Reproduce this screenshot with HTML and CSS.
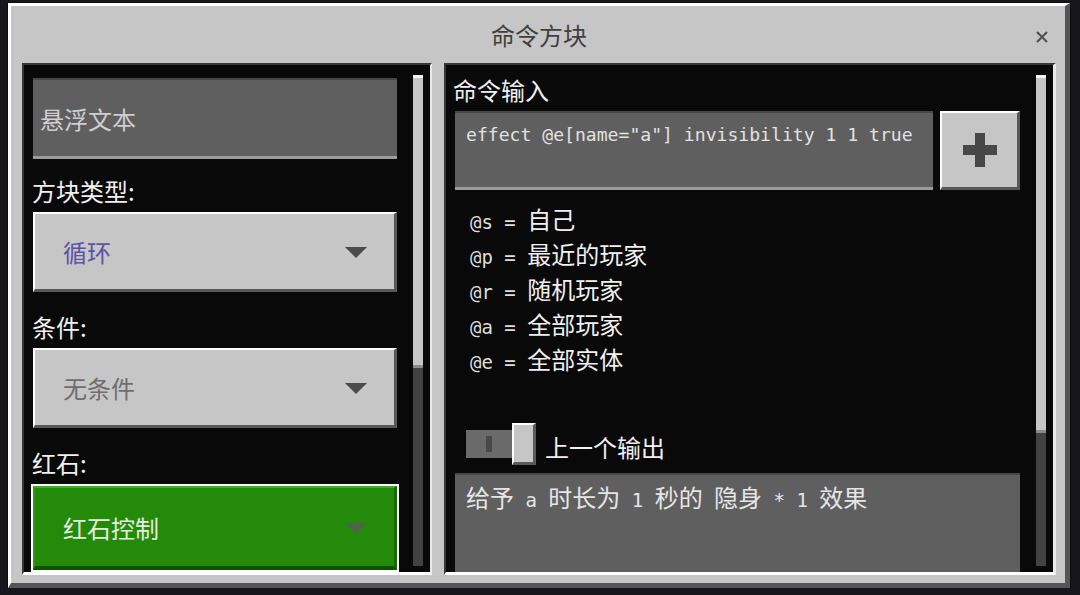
FILE: index.html
```html
<!DOCTYPE html>
<html lang="zh-CN">
<head>
  <meta charset="UTF-8">
  <meta name="viewport" content="width=device-width, initial-scale=1.0">
  <title>命令方块</title>
  <link rel="stylesheet" href="styles.css">
</head>
<body>
  <div class="dialog">
    <!-- Title bar -->
    <header class="titlebar">
      <span></span>
      <h1 class="title">命令方块</h1>
      <button class="close" aria-label="close">
        <svg width="14" height="14" viewBox="0 0 14 14">
          <path d="M2 2 L12 12 M12 2 L2 12" stroke="#4e4e4e" stroke-width="2" fill="none"/>
        </svg>
      </button>
    </header>

    <div class="panels">
      <!-- Left: block settings -->
      <section class="panel panel-left">
        <div class="panel-content">
          <div class="field field-name">悬浮文本</div>

          <div class="label label-first">方块类型:</div>
          <div class="dropdown">
            <span class="value value-blue">循环</span>
            <span class="arrow"></span>
          </div>

          <div class="label">条件:</div>
          <div class="dropdown">
            <span class="value value-gray">无条件</span>
            <span class="arrow"></span>
          </div>

          <div class="label">红石:</div>
          <div class="dropdown dropdown-green">
            <span class="value value-light">红石控制</span>
            <span class="arrow arrow-dim"></span>
          </div>
        </div>
        <div class="scrollbar"><div class="thumb thumb-left"></div></div>
      </section>

      <!-- Right: command input -->
      <section class="panel panel-right">
        <div class="panel-content">
          <div class="label label-top">命令输入</div>
          <div class="command-row">
            <div class="field field-command">effect @e[name="a"] invisibility 1 1 true</div>
            <button class="plus" aria-label="add">
              <svg width="36" height="36" viewBox="0 0 36 36">
                <rect x="13" y="1" width="10" height="34" fill="#474747"/>
                <rect x="1" y="13" width="34" height="10" fill="#474747"/>
              </svg>
            </button>
          </div>

          <ul class="selectors">
            <li><span class="mono">@s = </span>自己</li>
            <li><span class="mono">@p = </span>最近的玩家</li>
            <li><span class="mono">@r = </span>随机玩家</li>
            <li><span class="mono">@a = </span>全部玩家</li>
            <li><span class="mono">@e = </span>全部实体</li>
          </ul>

          <div class="toggle-row">
            <div class="toggle">
              <div class="toggle-track"><span class="toggle-mark"></span></div>
              <div class="toggle-knob"></div>
            </div>
            <span class="toggle-label">上一个输出</span>
          </div>

          <div class="field field-output">给予<span class="mono"> a </span>时长为<span class="mono"> 1 </span>秒的<span class="mono"> </span>隐身<span class="mono"> * 1 </span>效果</div>
        </div>
        <div class="scrollbar"><div class="thumb thumb-right"></div></div>
      </section>
    </div>
  </div>
</body>
</html>
```

FILE: styles.css
```css
* {
  box-sizing: border-box;
}

body {
  margin: 0;
  background-color: #16161c;
  font-family: "Noto Sans CJK SC", sans-serif;
  font-size: 24px;
  color: #ececec;
}

.mono {
  font-family: "DejaVu Sans Mono", monospace;
  font-size: 19px;
}

/* Dialog frame */
.dialog {
  margin: 3px 0 0 8px;
  width: 1062px;
  height: 585px;
  background-color: #c6c6c6;
  border-top: 3px solid #fff;
  border-left: 3px solid #fff;
  border-bottom: 5px solid #555;
  border-right: 5px solid #555;
  outline: 1px solid #0c0c0c;
  display: flex;
  flex-direction: column;
  padding: 0 9px 8px 11px;
}

.titlebar {
  height: 57px;
  flex-shrink: 0;
  display: grid;
  grid-template-columns: 1fr auto 1fr;
  align-items: start;
  padding-top: 17px;
}

.title {
  margin: 0;
  font-size: 24px;
  font-weight: normal;
  line-height: 24px;
  color: #3f3f3f;
}

.close {
  justify-self: end;
  margin-right: 7px;
  margin-top: 7px;
  padding: 0;
  border: none;
  background: none;
  width: 14px;
  height: 14px;
  line-height: 0;
}

/* Panels */
.panels {
  flex: 1;
  display: flex;
  gap: 12px;
  min-height: 0;
}

.panel {
  background-color: #090909;
  border-top: 2px solid #363636;
  border-left: 2px solid #363636;
  border-bottom: 3px solid #fff;
  border-right: 2px solid #e8e8e8;
  display: flex;
  overflow: hidden;
}

.panel-left {
  width: 410px;
}

.panel-right {
  flex: 1;
  border-right-width: 3px;
}

.panel-content {
  flex: 1;
  min-width: 0;
  display: flex;
  flex-direction: column;
  padding: 13px 16px 0 9px;
}

.panel-right .panel-content {
  padding-top: 10px;
}

.scrollbar {
  width: 10px;
  margin: 10px 7px 6px 0;
  background-color: #424242;
  display: flex;
  flex-direction: column;
}

.thumb {
  background-color: #c6c6c6;
  border-top: 3px solid #f4f4f4;
  border-bottom: 3px solid #8a8a8a;
}

.thumb-left {
  height: 293px;
}

.thumb-right {
  height: 358px;
}

/* Labels and fields */
.label {
  line-height: 30px;
  margin: 20px 0 6px -1px;
  color: #f0f0f0;
}

.label-first {
  margin-top: 17px;
}

.label-top {
  margin: 0 0 6px -2px;
}

.field {
  background-color: #5f5f5f;
  border-top: 2px solid #474747;
  border-bottom: 3px solid #9a9a9a;
}

.field-name {
  height: 81px;
  padding-left: 7px;
  display: flex;
  align-items: center;
  color: #cfcfcf;
}

/* Dropdowns */
.dropdown {
  height: 80px;
  background-color: #c6c6c6;
  border-top: 2px solid #fff;
  border-left: 2px solid #fff;
  border-bottom: 3px solid #585858;
  border-right: 3px solid #585858;
  display: flex;
  align-items: center;
  justify-content: space-between;
  padding: 0 27px 0 28px;
}

.value-blue {
  color: #5d52a6;
}

.value-gray {
  color: #6e6e6e;
}

.value-light {
  color: #e4eede;
}

.arrow {
  width: 0;
  height: 0;
  border-left: 11px solid transparent;
  border-right: 11px solid transparent;
  border-top: 11px solid #4b4b4b;
  margin-top: 2px;
}

.arrow-dim {
  border-top-color: #4f6549;
}

.dropdown-green {
  height: 84px;
  background-color: #238a0a;
  border-top: 2px solid #3bb021;
  border-left: 2px solid #2a9a12;
  border-bottom: 4px solid #0f5204;
  border-right: 3px solid #176a06;
  outline: 2px solid #fff;
  margin-top: 2px;
}

/* Command input */
.command-row {
  display: flex;
  gap: 7px;
}

.field-command {
  flex: 1;
  height: 79px;
  padding: 10px 0 0 11px;
  font-family: "DejaVu Sans Mono", monospace;
  font-size: 18.1px;
  line-height: 24px;
  color: #e2e2e2;
  white-space: nowrap;
}

.plus {
  width: 80px;
  height: 79px;
  padding: 0;
  background-color: #c6c6c6;
  border-top: 2px solid #fff;
  border-left: 2px solid #fff;
  border-bottom: 3px solid #585858;
  border-right: 3px solid #585858;
  display: flex;
  align-items: center;
  justify-content: center;
}

.selectors {
  list-style: none;
  margin: 11px 0 0 15px;
  padding: 0;
}

.selectors li {
  height: 35px;
  line-height: 35px;
  color: #f0f0f0;
}

.selectors .mono {
  color: #dedede;
}

/* Toggle */
.toggle-row {
  display: flex;
  align-items: center;
  margin: 47px 0 0 11px;
  height: 42px;
}

.toggle {
  display: flex;
  align-items: center;
}

.toggle-track {
  width: 46px;
  height: 28px;
  background-color: #6a6a6a;
  display: flex;
  align-items: center;
  justify-content: center;
}

.toggle-mark {
  width: 6px;
  height: 16px;
  background-color: #484848;
}

.toggle-knob {
  width: 24px;
  height: 42px;
  background-color: #c6c6c6;
  border-top: 2px solid #fff;
  border-left: 2px solid #fff;
  border-bottom: 3px solid #5a5a5a;
  border-right: 3px solid #5a5a5a;
}

.toggle-label {
  margin-left: 9px;
  margin-top: 4px;
  color: #f0f0f0;
}

.field-output {
  margin-top: 8px;
  flex: 1;
  border-bottom: none;
  padding: 7px 0 0 11px;
  line-height: 30px;
  color: #e6e6e6;
  white-space: nowrap;
}

.field-output .mono {
  color: #e6e6e6;
}
```
